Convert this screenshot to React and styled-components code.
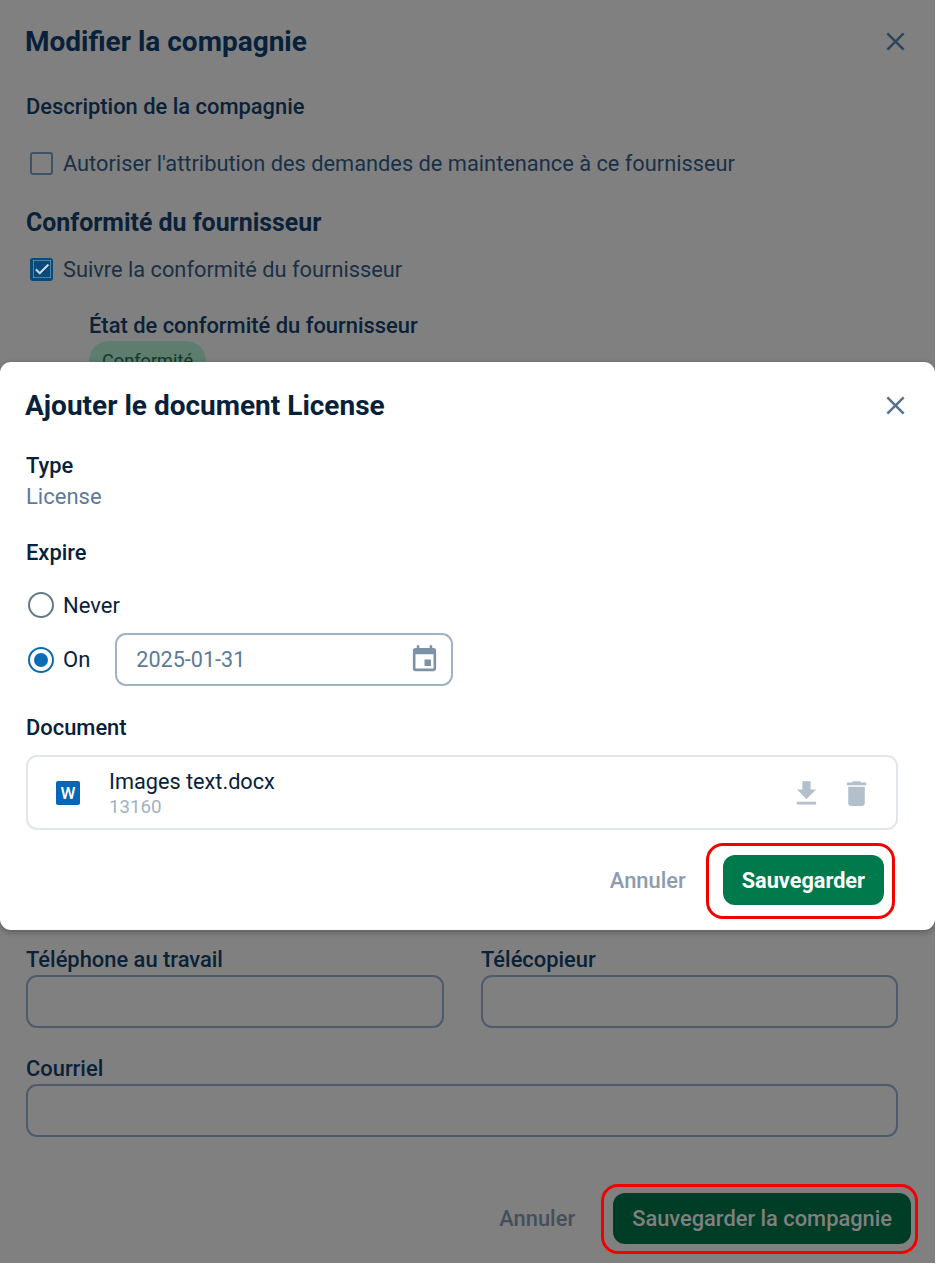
import React from "react";
import styled, { createGlobalStyle } from "styled-components";
import { MdClose, MdEvent, MdFileDownload, MdDelete, MdCheck } from "react-icons/md";

const Global = createGlobalStyle`
  html, body { margin: 0; padding: 0; background: #fff; }
  body { font-family: Roboto, "Liberation Sans", sans-serif; }
`;

const Stage = styled.div`
  position: relative;
  width: 935px;
  height: 1263px;
  background: #808080;
  overflow: hidden;
  color: #0b2138;
`;

const BaseForm = styled.div`
  display: flex;
  flex-direction: column;
  height: 100%;
  box-sizing: border-box;
  padding: 0 37px 0 26px;
`;

const Header = styled.div`
  display: flex;
  align-items: center;
  justify-content: space-between;
  height: 82px;
  margin-left: -1px;
  margin-right: -21px;
`;

const Title = styled.h2`
  margin: 0;
  padding-top: 2px;
  font-size: 28px;
  line-height: 32px;
  font-weight: 700;
  color: #08213b;
`;

const CloseBtn = styled.span`
  display: flex;
  color: ${p => p.$dim ? "#2e455e" : "#557390"};
  font-size: 31px;
  margin-right: 8px;
`;

const FieldLabel = styled.div`
  font-size: 21.9px;
  line-height: 26px;
  font-weight: 500;
  color: ${p => p.$dim ? "#0b2138" : "#08213b"};
`;

const DescLabel = styled(FieldLabel)`
  margin-top: 12px;
`;

const CheckRow = styled.label`
  display: flex;
  align-items: center;
  gap: 10px;
  padding-left: 4px;
  height: 30px;
  margin-top: ${p => p.$top}px;
  font-size: 21.8px;
  color: #1a3047;
`;

const CheckBox = styled.span`
  display: flex;
  align-items: center;
  justify-content: center;
  box-sizing: border-box;
  width: 23px;
  height: 23px;
  border-radius: 3px;
  border: 2px solid ${p => p.$on ? "#074a7c" : "#3f5368"};
  background: ${p => p.$on ? "#074a7c" : "transparent"};
  color: #d8d8d8;
  font-size: 18px;
  svg { stroke: currentColor; stroke-width: 1; }
`;

const SectionTitle = styled.div`
  margin-top: 30px;
  font-size: 24.9px;
  line-height: 30px;
  font-weight: 700;
`;

const Compliance = styled.div`
  margin: 29px 0 0 63px;
`;

const Chip = styled.div`
  display: inline-block;
  margin-top: 2px;
  padding: 9px 13px;
  border-radius: 22px;
  background: #5e7d6e;
  color: #12392a;
  font-size: 18.2px;
  line-height: 22px;
`;

const ContactGrid = styled.div`
  display: grid;
  grid-template-columns: 418px 417px;
  column-gap: 37px;
  row-gap: 28px;
  margin-top: 566px;
`;

const Field = styled.div`
  grid-column: ${p => p.$wide ? "1 / -1" : "auto"};
  display: flex;
  flex-direction: column;
  gap: 2px;
`;

const EmptyInput = styled.div`
  height: 53px;
  box-sizing: border-box;
  border: 2px solid #4d5b6b;
  border-radius: 11px;
`;

const BaseActions = styled.div`
  display: flex;
  justify-content: flex-end;
  align-items: center;
  gap: 38px;
  margin-top: 56px;
  margin-right: -13px;
`;

const TextBtn = styled.span`
  font-size: 21.9px;
  font-weight: 500;
  color: ${p => p.$dim ? "#444f5c" : "#8b9cae"};
`;

const PrimaryBtn = styled.span`
  position: relative;
  display: flex;
  align-items: center;
  justify-content: center;
  height: ${p => p.$dim ? 51 : 50}px;
  padding: 0 19px;
  border-radius: 12px;
  font-size: ${p => p.$dim ? 21.85 : 21.7}px;
  font-weight: ${p => p.$dim ? 500 : 700};
  background: ${p => p.$dim ? "#003d26" : "#007a4d"};
  color: ${p => p.$dim ? "#808080" : "#fff"};
`;

const Highlight = styled.span`
  position: absolute;
  inset: ${p => p.$t}px ${p => p.$r}px ${p => p.$b}px ${p => p.$l}px;
  border: 3px solid #f20000;
  border-radius: 17px;
  pointer-events: none;
`;

const Dialog = styled.div`
  position: absolute;
  left: 0;
  top: 362px;
  width: 935px;
  height: 568px;
  box-sizing: border-box;
  padding: 0 37px 0 26px;
  background: #fff;
  border-radius: 11px;
  box-shadow: 0 2px 6px rgba(0, 0, 0, 0.3);
  display: flex;
  flex-direction: column;
`;

const DialogHeader = styled(Header)`
  height: 86px;
`;

const TypeValue = styled.div`
  margin-top: 4px;
  font-size: 22px;
  line-height: 28px;
  color: #5d7a98;
`;

const TypeBlock = styled.div`
  margin-top: 5px;
`;

const ExpireLabel = styled(FieldLabel)`
  margin-top: 29px;
`;

const RadioRow = styled.div`
  display: flex;
  align-items: center;
  gap: 9px;
  padding-left: 2px;
  height: ${p => p.$h}px;
  margin-top: ${p => p.$top}px;
  font-size: 22px;
  font-weight: 400;
  color: #08213b;
`;

const Radio = styled.span`
  display: flex;
  align-items: center;
  justify-content: center;
  box-sizing: border-box;
  width: 26px;
  height: 26px;
  border-radius: 50%;
  border: 2px solid ${p => p.$on ? "#0a6cb5" : "#667888"};
  &::after {
    content: "";
    display: ${p => p.$on ? "block" : "none"};
    width: 14px;
    height: 14px;
    border-radius: 50%;
    background: #0a6cb5;
  }
`;

const DateInput = styled.div`
  display: flex;
  align-items: center;
  justify-content: space-between;
  box-sizing: border-box;
  width: 338px;
  height: 53px;
  margin-left: 16px;
  padding: 0 11px 0 19px;
  border: 2px solid #a3b2c2;
  border-radius: 11px;
  font-size: 21.6px;
  font-weight: 400;
  color: #5d7a98;
  svg { color: #7d92a6; font-size: 31px; }
`;

const DocLabel = styled(FieldLabel)`
  margin-top: 29px;
`;

const DocCard = styled.div`
  display: flex;
  align-items: center;
  box-sizing: border-box;
  height: 75px;
  margin-top: 14px;
  padding: 1px 23px 0 28px;
  border: 2px solid #e1e6ec;
  border-radius: 11px;
`;

const WordIcon = styled.span`
  display: flex;
  align-items: center;
  justify-content: center;
  width: 24px;
  height: 24px;
  border-radius: 2px;
  background: #0567b8;
  color: #fff;
  font-size: 17px;
  font-weight: 500;
`;

const DocInfo = styled.div`
  flex: 1;
  margin-left: 29px;
`;

const DocName = styled.div`
  font-size: 21.7px;
  line-height: 27px;
  color: #08213b;
`;

const DocSize = styled.div`
  font-size: 18.7px;
  line-height: 24px;
  color: #a4b1bf;
`;

const DocActions = styled.div`
  display: flex;
  align-items: center;
  gap: 17px;
  color: #b3bfca;
  font-size: 33px;
  svg { display: block; }
`;

const DialogActions = styled.div`
  display: flex;
  justify-content: flex-end;
  align-items: center;
  gap: 37px;
  margin-top: 25px;
  margin-right: 14px;
`;

export default function App() {
  return (
    <>
      <Global />
      <Stage>
        <BaseForm>
          <Header>
            <Title>Modifier la compagnie</Title>
            <CloseBtn $dim><MdClose /></CloseBtn>
          </Header>
          <DescLabel $dim>Description de la compagnie</DescLabel>
          <CheckRow $top={28}>
            <CheckBox />
            Autoriser l'attribution des demandes de maintenance à ce fournisseur
          </CheckRow>
          <SectionTitle>Conformité du fournisseur</SectionTitle>
          <CheckRow $top={16}>
            <CheckBox $on><MdCheck /></CheckBox>
            Suivre la conformité du fournisseur
          </CheckRow>
          <Compliance>
            <FieldLabel $dim>État de conformité du fournisseur</FieldLabel>
            <Chip>Conformité</Chip>
          </Compliance>
          <ContactGrid>
            <Field>
              <FieldLabel $dim>Téléphone au travail</FieldLabel>
              <EmptyInput />
            </Field>
            <Field>
              <FieldLabel $dim>Télécopieur</FieldLabel>
              <EmptyInput />
            </Field>
            <Field $wide>
              <FieldLabel $dim>Courriel</FieldLabel>
              <EmptyInput />
            </Field>
          </ContactGrid>
          <BaseActions>
            <TextBtn $dim>Annuler</TextBtn>
            <PrimaryBtn $dim>
              Sauvegarder la compagnie
              <Highlight $t={-9} $r={-7} $b={-10} $l={-12} />
            </PrimaryBtn>
          </BaseActions>
        </BaseForm>

        <Dialog>
          <DialogHeader>
            <Title>Ajouter le document License</Title>
            <CloseBtn><MdClose /></CloseBtn>
          </DialogHeader>
          <TypeBlock>
            <FieldLabel>Type</FieldLabel>
            <TypeValue>License</TypeValue>
          </TypeBlock>
          <ExpireLabel>Expire</ExpireLabel>
          <RadioRow $h={30} $top={24}>
            <Radio />
            Never
          </RadioRow>
          <RadioRow $h={53} $top={13}>
            <Radio $on />
            On
            <DateInput>
              2025-01-31
              <MdEvent />
            </DateInput>
          </RadioRow>
          <DocLabel>Document</DocLabel>
          <DocCard>
            <WordIcon>W</WordIcon>
            <DocInfo>
              <DocName>Images text.docx</DocName>
              <DocSize>13160</DocSize>
            </DocInfo>
            <DocActions>
              <MdFileDownload />
              <MdDelete />
            </DocActions>
          </DocCard>
          <DialogActions>
            <TextBtn>Annuler</TextBtn>
            <PrimaryBtn>
              Sauvegarder
              <Highlight $t={-12} $r={-11} $b={-14} $l={-17} />
            </PrimaryBtn>
          </DialogActions>
        </Dialog>
      </Stage>
    </>
  );
}
